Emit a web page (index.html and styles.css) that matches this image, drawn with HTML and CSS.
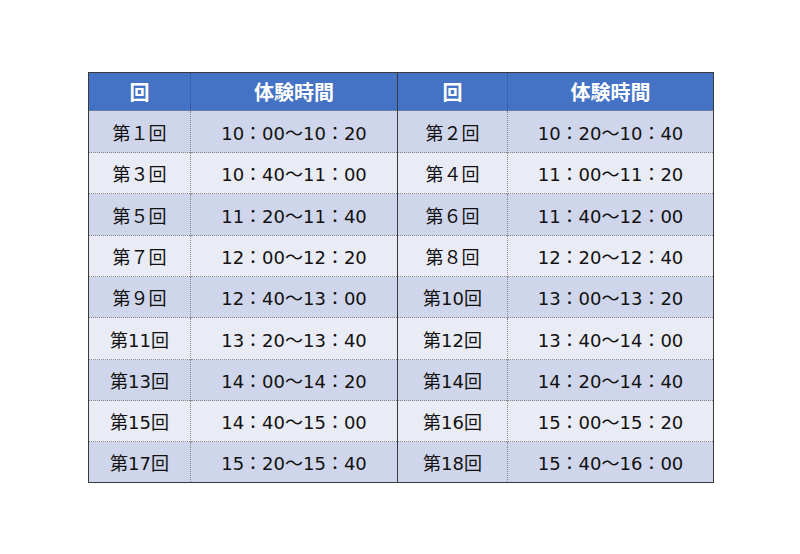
FILE: index.html
```html
<!DOCTYPE html>
<html lang="ja">
<head>
<meta charset="utf-8">
<link rel="stylesheet" href="styles.css">
</head>
<body>
<div class="page">
<table class="sched">
<colgroup>
<col class="c-no"><col class="c-time"><col class="c-no2"><col class="c-time2">
</colgroup>
<thead>
<tr><th>回</th><th>体験時間</th><th class="mid">回</th><th>体験時間</th></tr>
</thead>
<tbody>
<tr class="odd tall"><td>第１回</td><td>10：00～10：20</td><td class="mid">第２回</td><td>10：20～10：40</td></tr>
<tr class="even"><td>第３回</td><td>10：40～11：00</td><td class="mid">第４回</td><td>11：00～11：20</td></tr>
<tr class="odd tall"><td>第５回</td><td>11：20～11：40</td><td class="mid">第６回</td><td>11：40～12：00</td></tr>
<tr class="even"><td>第７回</td><td>12：00～12：20</td><td class="mid">第８回</td><td>12：20～12：40</td></tr>
<tr class="odd"><td>第９回</td><td>12：40～13：00</td><td class="mid">第10回</td><td>13：00～13：20</td></tr>
<tr class="even tall"><td>第11回</td><td>13：20～13：40</td><td class="mid">第12回</td><td>13：40～14：00</td></tr>
<tr class="odd"><td>第13回</td><td>14：00～14：20</td><td class="mid">第14回</td><td>14：20～14：40</td></tr>
<tr class="even"><td>第15回</td><td>14：40～15：00</td><td class="mid">第16回</td><td>15：00～15：20</td></tr>
<tr class="odd"><td>第17回</td><td>15：20～15：40</td><td class="mid">第18回</td><td>15：40～16：00</td></tr>
</tbody>
</table>
</div>
</body>
</html>
```
FILE: styles.css
```css
html, body {
  margin: 0;
  padding: 0;
  background: #ffffff;
}
.page {
  padding: 72px 0 0 88px;
}
.sched {
  border-collapse: collapse;
  table-layout: fixed;
  width: 625px;
  border: 1px solid #3a3a3a;
  font-family: "DejaVu Sans", "Noto Sans CJK JP", sans-serif;
  color: #111111;
}
.c-no { width: 102px; }
.c-time { width: 207px; }
.c-no2 { width: 110px; }
.c-time2 { width: 206px; }
.sched th {
  background: #4472c4;
  color: #ffffff;
  font-family: "Noto Sans CJK JP", sans-serif;
  font-weight: 700;
  font-size: 20px;
  height: 37px;
  padding: 0;
  text-align: center;
  border-left: 1px dotted #2f4f8f;
}
.sched td {
  font-size: 18px;
  height: 40px;
  padding: 0;
  text-align: center;
  border-left: 1px dotted #8a8a8a;
  border-top: 1px dotted #8a8a8a;
}
.sched .tall td {
  height: 41px;
}
.sched th.mid, .sched td.mid {
  border-left: 1px solid #3a3a3a;
}
.odd td { background: #cfd5ea; }
.even td { background: #e9ebf5; }
```
